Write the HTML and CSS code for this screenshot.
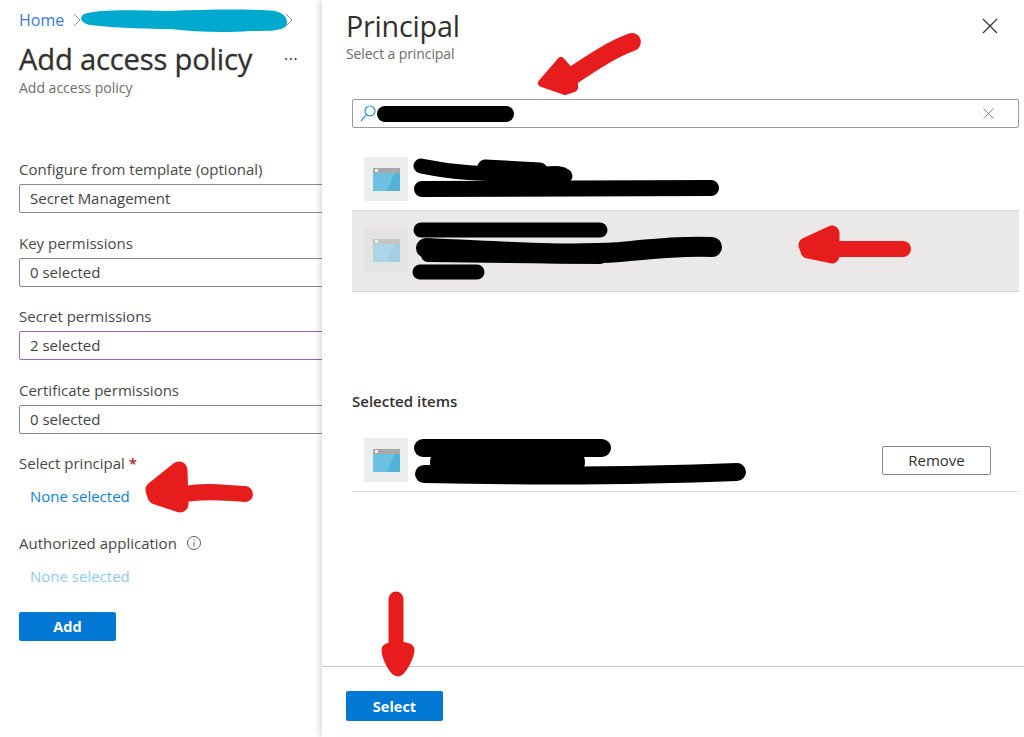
FILE: index.html
```html
<!DOCTYPE html>
<html lang="en">

<head>
    <meta charset="UTF-8">
    <meta content="width=device-width, initial-scale=1.0" name="viewport">
    <title>Add access policy</title>
    <link rel="stylesheet" href="styles.css">
</head>

<body>
<div class="page">
    <div class="policy">
        <div class="crumbs">
            <a>Home</a>
            <svg class="chev" width="8" height="14" viewBox="0 0 8 14"><path d="M1 1l6 6-6 6"/></svg>
            <span class="crumb-gap"></span>
            <svg class="chev" width="8" height="14" viewBox="0 0 8 14"><path d="M1 1l6 6-6 6"/></svg>
        </div>
        <div class="title-row">
            <h1>Add access policy</h1>
            <span class="more">&middot;&middot;&middot;</span>
        </div>
        <div class="sub">Add access policy</div>

        <div class="field first">
            <label>Configure from template (optional)</label>
            <div class="input">Secret Management</div>
        </div>
        <div class="field">
            <label>Key permissions</label>
            <div class="input">0 selected</div>
        </div>
        <div class="field tight">
            <label>Secret permissions</label>
            <div class="input purple">2 selected</div>
        </div>
        <div class="field">
            <label>Certificate permissions</label>
            <div class="input">0 selected</div>
        </div>
        <div class="field link-field">
            <label>Select principal <span class="req">*</span></label>
            <a class="pick">None selected</a>
        </div>
        <div class="field link-field second">
            <label>Authorized application
                <svg class="info" width="16" height="16" viewBox="0 0 16 16">
                    <circle cx="8" cy="8" r="6.5"/>
                    <path d="M8 7v4.5M8 4.4v1.4"/>
                </svg>
            </label>
            <a class="pick faded">None selected</a>
        </div>
        <button class="btn add">Add</button>
    </div>

    <div class="panel">
        <div class="panel-head">
            <div>
                <h2>Principal</h2>
                <div class="panel-sub">Select a principal</div>
            </div>
            <svg class="close" width="16" height="16" viewBox="0 0 16 16"><path d="M1 1l14 14M15 1L1 15"/></svg>
        </div>

        <div class="panel-body">
            <div class="search">
                <svg width="16" height="17" viewBox="0 0 16 17" class="lens">
                    <circle cx="10" cy="6" r="5"/>
                    <path d="M6.400 9.600L1 16"/>
                </svg>
                <svg width="11" height="11" viewBox="0 0 11 11" class="clear"><path d="M.5.5l10 10M10.500 .5l-10 10"/></svg>
            </div>

            <div class="result">
                <div class="app-icon"><div class="app-win"></div></div>
            </div>
            <div class="result hover">
                <div class="app-icon"><div class="app-win"></div></div>
            </div>

            <h3>Selected items</h3>
            <div class="chosen">
                <div class="app-icon"><div class="app-win"></div></div>
                <button class="remove">Remove</button>
            </div>
        </div>

        <div class="panel-foot">
            <button class="btn tall">Select</button>
        </div>
    </div>
</div>

<!-- scribbles someone drew on top of the screenshot -->
<svg class="marks" width="1024" height="737" viewBox="0 0 1024 737">
    <path class="teal" d="M84 14C100 9 130 10 170 11C210 9 255 9 275 11C285 13 289 20 286 26C282 31 270 31 250 31C225 33 195 32 170 29C140 29 105 27 90 25C80 23 79 17 84 14Z"/>

    <g class="ink">
        <path stroke-width="16" d="M385 114H506"/>
        <path stroke-width="15" d="M421 166C450 172 480 175 540 174C553 174 560 172 565 176M485 167L540 170"/>
        <path stroke-width="16" d="M422 189L711 188"/>
        <path stroke-width="15" d="M421 230H600"/>
        <path stroke-width="20" d="M426 248C500 251 560 256 620 252C670 247 690 246 712 247"/>
        <path stroke-width="14" d="M428 255L600 257"/>
        <path stroke-width="15" d="M420 272H477"/>
        <path stroke-width="18" d="M423 448H602"/>
        <path stroke-width="30" d="M445 462H570"/>
        <path stroke-width="18" d="M424 474C520 476 640 476 737 472"/>
    </g>

    <g class="red">
        <path d="M632 42C610 50 590 64 566 80" stroke-width="18" fill="none"/>
        <path d="M561 61L542 83L565 91L574 88L574 76Z" stroke-width="8"/>
        <path d="M840 249H903" stroke-width="16" fill="none"/>
        <path d="M832 233L806 245L808 251L832 256Z" stroke-width="15"/>
        <path d="M186 494C205 490 225 493 245 494" stroke-width="16" fill="none"/>
        <path d="M179 470L154 490L156 496L180 504Z" stroke-width="17"/>
        <path d="M396 599V650" stroke-width="15" fill="none"/>
        <path d="M386 650C386 645 410 645 410 650C410 656 402 672 398 672C393 672 386 656 386 650Z" stroke-width="9"/>
    </g>
</svg>
</body>

</html>
```

FILE: styles.css
```css
html, body {
    height: 100%;
    margin: 0;
    padding: 0;
    overflow: hidden;
    background: #fff;
}

body {
    font-family: "Open Sans", "Liberation Sans", sans-serif;
    font-size: 15px;
    color: #323130;
}

.page {
    display: flex;
    height: 737px;
}

/* left blade */
.policy {
    width: 322px;
    flex: none;
    padding: 10px 0 0 19px;
    box-sizing: border-box;
    overflow: hidden;
}

.crumbs {
    display: flex;
    align-items: center;
    gap: 9px;
    height: 20px;
    color: #3b78d8;
    font-size: 16px;
}

.crumb-gap {
    width: 186px;
}

.chev path {
    fill: none;
    stroke: #8f8f8f;
    stroke-width: 1;
}

.title-row {
    display: flex;
    align-items: center;
    margin-top: 6px;
    height: 46px;
}

h1 {
    margin: 0;
    font-size: 29.200px;
    font-weight: 400;
    letter-spacing: -0.2px;
    white-space: nowrap;
    -webkit-text-stroke: 0.3px #323130;
}

.more {
    margin-left: 32px;
    font-size: 16px;
    letter-spacing: 0.5px;
}

.sub {
    color: #6e6c6a;
    font-size: 14px;
    margin-top: -3px;
    line-height: 18px;
}

.field {
    margin-top: 20px;
    white-space: nowrap;
}

.field.tight {
    margin-top: 19px;
}

.field.first {
    margin-top: 62px;
}

.field label {
    display: flex;
    align-items: center;
    gap: 4px;
    height: 20px;
    color: #4a4846;
}

.input {
    margin-top: 5px;
    width: 340px;
    height: 29px;
    line-height: 27px;
    box-sizing: border-box;
    border: 1px solid #8a8886;
    border-radius: 2px;
    padding-left: 10px;
    color: #444;
}

.input.purple {
    border-color: #9a62b8;
}

.req {
    color: #a4262c;
    font-weight: 600;
}

.field.link-field {
    margin-top: 19px;
}

.field.second {
    margin-top: 27px;
}

.pick {
    display: block;
    margin: 13px 0 0 11px;
    height: 20px;
    line-height: 20px;
    color: #0f7fd6;
}

.faded {
    color: #92c8f0;
}

.info {
    margin-left: 5px;
}

.info circle, .info path {
    fill: none;
    stroke: #605e5c;
    stroke-width: 1;
}

.btn {
    display: block;
    width: 97px;
    height: 29px;
    padding: 0;
    border: 0;
    border-radius: 2px;
    background: #0078d4;
    color: #fff;
    font-family: inherit;
    font-size: 14.500px;
    font-weight: 700;
}

.btn.tall {
    height: 30px;
}

.add {
    margin-top: 26px;
}

/* right panel */
.panel {
    flex: 1;
    display: flex;
    flex-direction: column;
    background: #fff;
    box-shadow: -3px 0 6px rgba(0, 0, 0, 0.13);
    position: relative;
}

.panel-head {
    display: flex;
    justify-content: space-between;
    padding: 7px 26px 0 24px;
    height: 86px;
}

h2 {
    margin: 0;
    font-size: 28.700px;
    line-height: 38px;
    font-weight: 400;
    letter-spacing: -0.2px;
}

.panel-sub {
    font-size: 14px;
    line-height: 18px;
    color: #6e6c6a;
    letter-spacing: -0.1px;
}

.close {
    margin-top: 11px;
}

.close path {
    fill: none;
    stroke: #323130;
    stroke-width: 1.2;
}

.panel-body {
    flex: 1;
    padding: 6px 5px 0 30px;
}

.search {
    display: flex;
    align-items: center;
    justify-content: space-between;
    height: 29px;
    box-sizing: border-box;
    border: 1px solid #9a9a9a;
    border-radius: 2px;
    padding: 0 24px 0 7px;
}

.lens circle, .lens path {
    fill: none;
    stroke: #2f8fe0;
    stroke-width: 1.2;
}

.clear path {
    fill: none;
    stroke: #8a8886;
    stroke-width: 1;
}

.result {
    display: flex;
    align-items: center;
    margin-top: 29px;
    padding-left: 12px;
    height: 44px;
}

.result.hover {
    margin-top: 9px;
    height: 82px;
    padding-bottom: 2px;
    box-sizing: border-box;
    background: #ebe9e8;
    border-top: 1px solid #dedcdb;
    border-bottom: 1px solid #d8d6d5;
}

.app-icon {
    display: flex;
    align-items: center;
    justify-content: center;
    width: 44px;
    height: 44px;
    background: #ebeded;
}

.hover .app-icon {
    background: #e3e3e2;
}

.app-win {
    position: relative;
    width: 27px;
    height: 23px;
    border-top: 5px solid #a8a8a8;
    box-sizing: border-box;
    background: linear-gradient(115deg, #6cc0e2 62%, #52b2da 62%);
}

/* little dot in the window's title bar */
.app-win::before {
    content: "";
    position: absolute;
    left: 2px;
    top: -4px;
    width: 3px;
    height: 3px;
    background: #eee;
}

.hover .app-win {
    background: linear-gradient(115deg, #acd6e8 62%, #a0cfe4 62%);
    border-top-color: #c4c4c4;
}

h3 {
    margin: 99px 0 0;
    font-size: 15px;
    line-height: 20px;
    font-weight: 600;
}

.chosen {
    display: flex;
    align-items: center;
    justify-content: space-between;
    margin-top: 27px;
    padding: 0 28px 9px 12px;
    height: 54px;
    box-sizing: border-box;
    border-bottom: 1px solid #dcdcdc;
}

.remove {
    width: 109px;
    height: 29px;
    padding: 0;
    background: #fff;
    border: 1px solid #8a8886;
    border-radius: 2px;
    color: #323130;
    font-family: inherit;
    font-size: 15px;
}

.panel-foot {
    height: 71px;
    box-sizing: border-box;
    border-top: 1px solid #c8c8c8;
    padding: 24px 0 0 24px;
}

/* annotation layer, painted over the whole screenshot */
.marks {
    position: absolute;
    left: 0;
    top: 0;
    pointer-events: none;
}

.teal {
    fill: #00a9ce;
}

.ink path {
    fill: none;
    stroke: #000;
    stroke-linecap: round;
    stroke-linejoin: round;
}

.red path {
    stroke: #e71c1c;
    stroke-linecap: round;
    stroke-linejoin: round;
}

.red path:not([fill]) {
    fill: #e71c1c;
}
```
